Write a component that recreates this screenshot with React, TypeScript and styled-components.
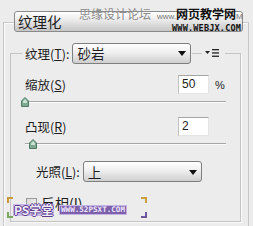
import React from "react";
import styled, { createGlobalStyle } from "styled-components";

const GlobalStyle = createGlobalStyle`
  html, body {
    margin: 0;
    padding: 0;
    background: #ececec;
  }
  body {
    font-family: "Noto Sans CJK SC", "Liberation Sans", sans-serif;
    color: #1e1e1e;
  }
`;

const Frame = styled.div`
  position: relative;
  width: 253px;
  height: 226px;
  overflow: hidden;
  box-sizing: border-box;
  padding-top: 11px;
  background: #ececec;
`;

const Header = styled.div`
  position: relative;
  z-index: 1;
  box-sizing: border-box;
  margin-left: 14px;
  width: 229px;
  height: 21px;
  padding-left: 3px;
  border: 1px solid #8a8a8a;
  border-radius: 3px;
  background: linear-gradient(#ffffff, #ececec 40%, #c6c6c6);
  font-size: 14.5px;
  line-height: 19px;
`;

const Panel = styled.div`
  box-sizing: border-box;
  margin: -10px 0 0 3px;
  width: 246px;
  height: 220px;
  padding-top: 20px;
  border: 1px solid #c8c8c8;
  border-bottom: none;
  box-shadow: inset 1px 1px 0 #fafafa;
`;

const Group = styled.fieldset`
  box-sizing: border-box;
  margin: 0 0 0 6px;
  width: 231px;
  height: 179px;
  padding: 0 0 0 11px;
  border: 1px solid #c4c4c4;
  box-shadow: 1px 1px 0 #fafafa;
`;

const Legend = styled.legend`
  display: flex;
  align-items: center;
  padding: 0 5px 0 3px;
  height: 20px;
`;

const Label = styled.span`
  font-size: 12.5px;
  white-space: nowrap;
`;

const Key = styled.u`
  text-decoration-thickness: 1px;
  text-underline-offset: 1px;
`;

const Select = styled.div<{ $width: number }>`
  box-sizing: border-box;
  display: flex;
  align-items: center;
  justify-content: space-between;
  width: ${(p) => p.$width}px;
  height: 21px;
  margin-left: 3px;
  padding: 0 4px 0 4px;
  border: 1px solid #7e7e7e;
  border-radius: 3px;
  background: linear-gradient(#ffffff, #efefef 45%, #cfcfcf);
  font-size: 13.5px;
`;

const Arrow = styled.span`
  width: 0;
  height: 0;
  border-left: 4px solid transparent;
  border-right: 4px solid transparent;
  border-top: 5px solid #111;
  margin-top: 1px;
`;

const Rule = styled.span`
  width: 10px;
  height: 1px;
  margin: 0 1px;
  background: #c4c4c4;
`;

const MenuIcon = styled.svg`
  display: block;
  margin-left: 1px;
`;

const Row = styled.div<{ $top: number; $indent: number }>`
  display: flex;
  align-items: center;
  margin-top: ${(p) => p.$top}px;
  padding-left: ${(p) => p.$indent}px;
`;

const Field = styled.div`
  box-sizing: border-box;
  margin-left: auto;
  width: 31px;
  height: 19px;
  padding: 1px 0 0 3px;
  background: #fff;
  border-top: 1px solid #a4a4a4;
  border-left: 1px solid #c0c0c0;
  border-right: 1px solid #e4e4e4;
  border-bottom: 1px solid #e4e4e4;
  font-family: "Liberation Sans", Arial, sans-serif;
  font-size: 12px;
  line-height: 15px;
`;

const Unit = styled.span`
  box-sizing: border-box;
  width: 31px;
  padding-left: 6px;
  font-family: "Liberation Sans", Arial, sans-serif;
  font-size: 11px;
`;

const Slider = styled.div`
  position: relative;
  margin: 2px 0 0 3px;
  width: 201px;
  height: 12px;
`;

const Track = styled.div`
  position: absolute;
  left: 0;
  right: 0;
  top: 5px;
  height: 1px;
  background: #a6a6a6;
  box-shadow: 0 1px 0 #fbfbfb;
`;

const Thumb = styled.svg<{ $left: number }>`
  position: absolute;
  top: 1px;
  left: ${(p) => p.$left}px;
`;

const Check = styled.span`
  box-sizing: border-box;
  width: 11px;
  height: 11px;
  margin-right: 4px;
  border: 1px solid #9a9a9a;
  background: linear-gradient(135deg, #d8d8d8, #f7f7f7);
`;

const CheckLabel = styled.span`
  font-size: 14px;
`;

const Mark = styled.span<{ $x: number; $y: number }>`
  position: absolute;
  z-index: 2;
  left: ${(p) => p.$x}px;
  top: ${(p) => p.$y}px;
  white-space: nowrap;
  line-height: 1;
`;

const ForumMark = styled(Mark)`
  font-size: 12px;
  color: #8c8c8c;
`;

const SmallMark = styled(Mark)`
  font-family: "Liberation Sans", Arial, sans-serif;
  font-size: 8px;
  color: #7a7a7a;
`;

const SiteMark = styled(Mark)`
  font-size: 12px;
  font-weight: 700;
  color: #111;
`;

const UrlMark = styled(Mark)`
  font-family: "DejaVu Sans Mono", monospace;
  font-size: 8.5px;
  font-weight: 700;
  letter-spacing: 0.2px;
  color: #111;
`;

const SchoolMark = styled(Mark)`
  padding: 0 1px;
  background: #c8b8e6;
  font-size: 12px;
  font-weight: 700;
  color: #f2ecff;
  text-shadow: 1px 0 0 #5b3d8c, -1px 0 0 #5b3d8c, 0 1px 0 #5b3d8c, 0 -1px 0 #5b3d8c;
`;

const SchoolUrl = styled(Mark)`
  padding: 0 1px;
  background: #7c60aa;
  border: 1px solid #c4b4e4;
  font-family: "DejaVu Sans Mono", monospace;
  font-size: 7.6px;
  font-weight: 700;
  color: #eee6ff;
`;

const Corner = styled.span<{ $x: number; $y: number; $color: string; $rot: number }>`
  position: absolute;
  z-index: 2;
  left: ${(p) => p.$x}px;
  top: ${(p) => p.$y}px;
  width: 4px;
  height: 4px;
  border-left: 2px solid ${(p) => p.$color};
  border-top: 2px solid ${(p) => p.$color};
  transform: rotate(${(p) => p.$rot}deg);
`;

const ThumbShape = ({ left }: { left: number }) => (
  <Thumb $left={left} width="8" height="10" viewBox="0 0 8 10">
    <path d="M4 0.5 L7.5 4 L7.5 9.5 L0.5 9.5 L0.5 4 Z" fill="#7fa892" stroke="#4f7a63" strokeWidth="1" />
    <path d="M4 2 L6 4.2 L6 6 L2 6 L2 4.2 Z" fill="#c9e2d3" />
  </Thumb>
);

export default function App() {
  return (
    <>
      <GlobalStyle />
      <Frame>
        <Header>纹理化</Header>
        <Panel>
          <Group>
            <Legend>
              <Label>
                纹理(<Key>T</Key>):
              </Label>
              <Select $width={119}>
                <span>砂岩</span>
                <Arrow />
              </Select>
              <Rule />
              <MenuIcon width="16" height="10" viewBox="0 0 16 10">
                <path d="M1 3 L6 3 L3.5 6 Z" fill="#222" />
                <rect x="8" y="1" width="7" height="1.3" fill="#222" />
                <rect x="8" y="4.3" width="7" height="1.3" fill="#222" />
                <rect x="8" y="7.6" width="7" height="1.3" fill="#222" />
              </MenuIcon>
            </Legend>

            <Row $top={12} $indent={3}>
              <Label>
                缩放(<Key>S</Key>)
              </Label>
              <Field>50</Field>
              <Unit>%</Unit>
            </Row>
            <Slider>
              <Track />
              <ThumbShape left={-4} />
            </Slider>

            <Row $top={9} $indent={3}>
              <Label>
                凸现(<Key>R</Key>)
              </Label>
              <Field>2</Field>
              <Unit />
            </Row>
            <Slider>
              <Track />
              <ThumbShape left={4} />
            </Slider>

            <Row $top={11} $indent={14}>
              <Label>
                光照(<Key>L</Key>):
              </Label>
              <Select $width={119}>
                <span>上</span>
                <Arrow />
              </Select>
            </Row>

            <Row $top={11} $indent={4}>
              <Check />
              <CheckLabel>
                反相(<Key>I</Key>)
              </CheckLabel>
            </Row>
          </Group>
        </Panel>

        <ForumMark $x={79} $y={8}>思缘设计论坛</ForumMark>
        <SmallMark $x={157} $y={13}>www.</SmallMark>
        <SiteMark $x={176} $y={8}>网页教学网</SiteMark>
        <SmallMark $x={236} $y={13}>M</SmallMark>
        <UrlMark $x={172} $y={24}>WWW.WEBJX.COM</UrlMark>

        <Corner $x={7} $y={197} $color="#c89a3a" $rot={0} />
        <Corner $x={141} $y={197} $color="#c8a040" $rot={90} />
        <Corner $x={7} $y={212} $color="#7aa860" $rot={270} />
        <Corner $x={141} $y={212} $color="#6a58a0" $rot={180} />
        <SchoolMark $x={13} $y={204}>PS学堂</SchoolMark>
        <SchoolUrl $x={59} $y={205}>WWW.52PSXT.COM</SchoolUrl>
      </Frame>
    </>
  );
}
